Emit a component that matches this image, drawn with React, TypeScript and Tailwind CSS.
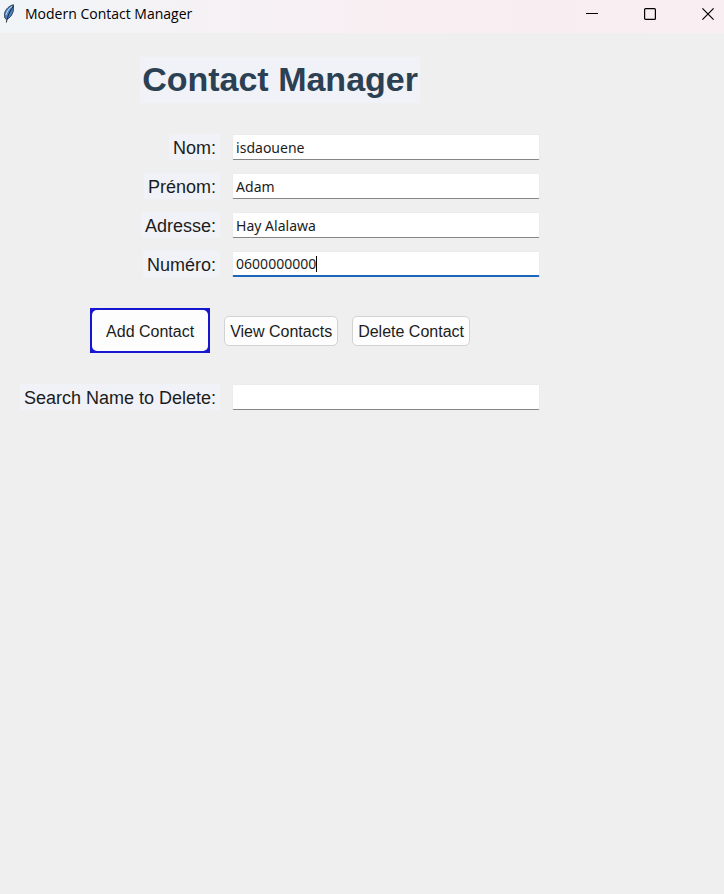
import { useState } from "react";

type FieldProps = {
  id: string;
  label: string;
  value: string;
  onChange: (value: string) => void;
  active?: boolean;
};

function Field({ id, label, value, onChange, active = false }: FieldProps) {
  return (
    <>
      <label
        htmlFor={id}
        className="justify-self-end bg-[#f0f2f7] px-1 pt-0.5 text-lg leading-6 whitespace-nowrap text-[#1c1c1c]"
      >
        {label}
      </label>
      <div
        className={`flex h-[26px] items-center rounded-xs border-x border-t border-[#ececec] bg-white px-[3px] ${
          active ? "border-b-2 border-b-[#1a66b8]" : "border-b border-b-[#868686]"
        }`}
      >
        <input
          id={id}
          type="text"
          value={value}
          size={active ? 10 : 30}
          onChange={(event) => onChange(event.target.value)}
          className={`h-full bg-transparent font-['Noto_Sans','Open_Sans',sans-serif] text-sm leading-5 text-[#1c1c1c] outline-none ${
            active ? "field-sizing-content" : "w-full"
          }`}
        />
        {active && <span className="h-4 w-px bg-black" />}
      </div>
    </>
  );
}

function Feather() {
  return (
    <svg viewBox="0 0 14 20" className="h-5 w-3.5" aria-hidden="true">
      <path d="M10.500 0.800C6.500 1.500 2.500 5 1.500 9.500L1.800 14L3.500 15.500C7 14 9.300 11 10.300 7Z" fill="#4a80c4" stroke="#33435a" strokeWidth="1" />
      <path d="M9 2.500C6 4 4 7 3 11L4 8C5 6 7 4 9 2.500Z" fill="#a9cdf0" stroke="#a9cdf0" strokeWidth="1" />
      <path d="M10 2.500C7 7 5 11 3.300 18.500" fill="none" stroke="#1d242e" strokeWidth="1" />
    </svg>
  );
}

function TitleBar() {
  return (
    <header className="flex h-[33px] items-start justify-between bg-linear-to-r from-[#f1f5f7] via-[#f8eff3] via-50% to-[#f9eef2]">
      <div className="flex h-7 items-center gap-2 pl-[3px]">
        <Feather />
        <span className="font-['Open_Sans','Noto_Sans',sans-serif] text-sm leading-5 whitespace-nowrap text-black">
          Modern Contact Manager
        </span>
      </div>
      <div className="flex h-7 items-center gap-[46px] pr-2.5">
        <button type="button" aria-label="Minimize" className="h-3 w-3">
          <svg viewBox="0 0 12 12" className="h-3 w-3">
            <path d="M0 5.500H12" stroke="#000" />
          </svg>
        </button>
        <button type="button" aria-label="Maximize" className="h-3 w-3">
          <svg viewBox="0 0 12 12" className="h-3 w-3">
            <rect x="0.600" y="0.600" width="10.800" height="10.800" rx="1" fill="none" stroke="#000" strokeWidth="1.200" />
          </svg>
        </button>
        <button type="button" aria-label="Close" className="h-3 w-3">
          <svg viewBox="0 0 12 12" className="h-3 w-3">
            <path d="M0.400 0.400L11.600 11.600M11.600 0.400L0.400 11.600" stroke="#000" strokeWidth="1.200" />
          </svg>
        </button>
      </div>
    </header>
  );
}

const plainButton =
  "h-[30px] rounded-[5px] border border-[#d2d2d2] bg-[#fdfdfd] px-[5px] pt-0.5 text-base leading-5 whitespace-nowrap text-[#1c1c1c]";

export default function App() {
  const [nom, setNom] = useState("isdaouene");
  const [prenom, setPrenom] = useState("Adam");
  const [adresse, setAdresse] = useState("Hay Alalawa");
  const [numero, setNumero] = useState("0600000000");
  const [search, setSearch] = useState("");

  return (
    <div className="min-h-screen bg-[#efefef] font-['Liberation_Sans',Arial,sans-serif]">
      <TitleBar />
      <main className="grid w-fit grid-cols-[auto_308px] items-center gap-x-3 gap-y-[13px] pt-6 pl-5">
        <h1 className="col-span-2 mb-[18px] justify-self-center bg-[#f0f2f7] px-0.5 pb-0.5 text-[34px] leading-[44px] font-bold whitespace-nowrap text-[#2c4054]">
          Contact Manager
        </h1>
        <Field id="nom" label="Nom:" value={nom} onChange={setNom} />
        <Field id="prenom" label="Prénom:" value={prenom} onChange={setPrenom} />
        <Field id="adresse" label="Adresse:" value={adresse} onChange={setAdresse} />
        <Field id="numero" label="Numéro:" value={numero} onChange={setNumero} active />
        <div className="col-span-2 my-[18px] flex items-center gap-3.5 justify-self-center">
          <div className="h-[45px] bg-[#1616d0] p-0.5">
            <button
              type="button"
              className="h-full rounded-[5px] bg-[#fdfdfd] px-3.5 pt-0.5 text-base leading-5 whitespace-nowrap text-[#1c1c1c]"
            >
              Add Contact
            </button>
          </div>
          <button type="button" className={plainButton}>
            View Contacts
          </button>
          <button type="button" className={plainButton}>
            Delete Contact
          </button>
        </div>
        <Field id="search" label="Search Name to Delete:" value={search} onChange={setSearch} />
      </main>
    </div>
  );
}
